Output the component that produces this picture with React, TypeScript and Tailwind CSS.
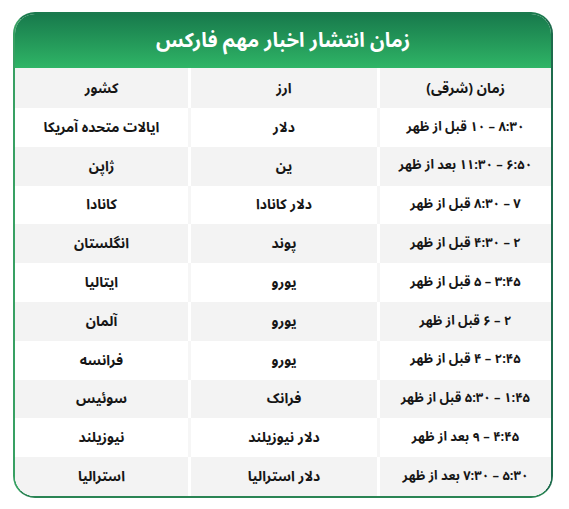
import React from "react";

const rows: [string, string, string][] = [
  ["ایالات متحده آمریکا", "دلار", "۸:۳۰ – ۱۰ قبل از ظهر"],
  ["ژاپن", "ین", "۶:۵۰ – ۱۱:۳۰ بعد از ظهر"],
  ["کانادا", "دلار کانادا", "۷ – ۸:۳۰ قبل از ظهر"],
  ["انگلستان", "پوند", "۲ – ۴:۳۰ قبل از ظهر"],
  ["ایتالیا", "یورو", "۳:۴۵ – ۵ قبل از ظهر"],
  ["آلمان", "یورو", "۲ – ۶ قبل از ظهر"],
  ["فرانسه", "یورو", "۲:۴۵ – ۴ قبل از ظهر"],
  ["سوئیس", "فرانک", "۱:۴۵ – ۵:۳۰ قبل از ظهر"],
  ["نیوزیلند", "دلار نیوزیلند", "۴:۴۵ – ۹ بعد از ظهر"],
  ["استرالیا", "دلار استرالیا", "۵:۳۰ – ۷:۳۰ بعد از ظهر"],
];

export default function App() {
  return (
    <div
      dir="rtl"
      className="w-[569px] h-[509px] bg-white pt-[12px] pr-[16px] text-[#161616]"
      style={{ fontFamily: '"Noto Sans Arabic", "DejaVu Sans", sans-serif' }}
    >
      <div className="w-[540px] h-[486px] rounded-[22px] overflow-hidden border-2 border-t-[#1b7a4e] border-r-[#1d6b4c] border-l-[#38a063] border-b-[#2a8454] bg-white flex flex-col">
        <div className="h-[54px] shrink-0 bg-gradient-to-b from-[#187a4c] to-[#2fb566] flex items-center justify-center">
          <h1 className="text-white text-[20px] font-bold leading-none">زمان انتشار اخبار مهم فارکس</h1>
        </div>
        <div className="grid grid-cols-[171px_186px_173px] gap-x-[3px] h-[40px] bg-white shrink-0">
          <div className="bg-[#f3f3f3] flex items-center justify-center text-[14px] font-bold">زمان (شرقی)</div>
          <div className="bg-[#f3f3f3] flex items-center justify-center text-[14px] font-bold">ارز</div>
          <div className="bg-[#f3f3f3] flex items-center justify-center text-[14px] font-bold">کشور</div>
        </div>
        {rows.map((r, i) => {
          const even = i % 2 === 0;
          const bg = even ? "bg-white" : "bg-[#f3f3f3]";
          return (
            <div
              key={i}
              className={
                even
                  ? "grid grid-cols-[171px_186px_173px] gap-x-[3px] h-[38.8px] bg-[#f6f6f6] shrink-0"
                  : "grid grid-cols-[171px_186px_173px] gap-x-[3px] h-[38.8px] bg-white shrink-0"
              }
            >
              <div className={bg + " flex items-center justify-center text-[13px] font-bold"}>{r[2]}</div>
              <div className={bg + " flex items-center justify-center text-[14px] font-bold"}>{r[1]}</div>
              <div className={bg + " flex items-center justify-center text-[14px] font-bold"}>{r[0]}</div>
            </div>
          );
        })}
      </div>
    </div>
  );
}
